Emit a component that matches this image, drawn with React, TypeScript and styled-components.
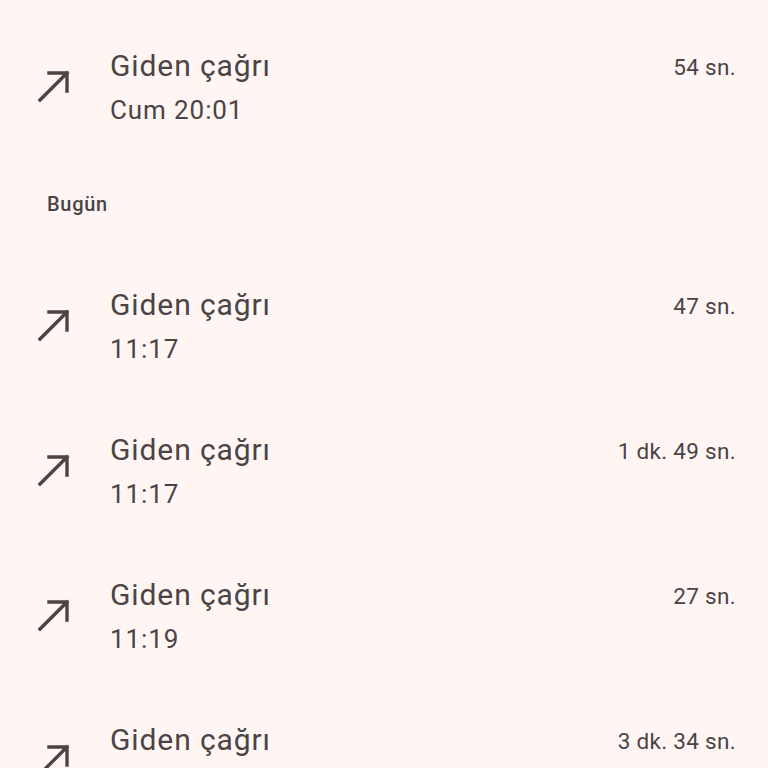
import React from 'react';
import styled, { createGlobalStyle } from 'styled-components';

const GlobalStyle = createGlobalStyle`
  html, body {
    margin: 0;
    padding: 0;
    background: #fff6f4;
  }
  body {
    font-family: Roboto, 'Noto Sans', sans-serif;
    color: #4a4446;
  }
`;

const Page = styled.div`
  width: 768px;
  height: 768px;
  overflow: hidden;
  background: #fff6f4;
  padding-top: 15px;
  box-sizing: border-box;
`;

const Row = styled.div`
  height: 145px;
  display: grid;
  grid-template-columns: 110px 1fr auto;
  align-items: center;
  padding-right: 32px;
  box-sizing: border-box;
`;

const IconCell = styled.div`
  display: flex;
  align-items: center;
  padding-left: 37px;
  margin-top: -4px;
`;

const Texts = styled.div`
  display: flex;
  flex-direction: column;
  gap: 10px;
  margin-top: -2px;
`;

const Title = styled.div`
  font-size: 30px;
  line-height: 37px;
  color: #4a4446;
  letter-spacing: 0.9px;
`;

const Sub = styled.div`
  font-size: 26px;
  line-height: 32px;
  color: #4a4446;
  letter-spacing: 0.9px;
`;

const Duration = styled.div`
  align-self: start;
  margin-top: 37px;
  font-size: 22.5px;
  line-height: 30px;
  color: #4a4446;
  letter-spacing: 0.3px;
`;

const Header = styled.div`
  height: 94px;
  padding: 32px 0 0 47px;
  box-sizing: border-box;
  font-size: 20px;
  font-weight: 500;
  letter-spacing: 0.7px;
  color: #4a4446;
`;

const OutgoingIcon = () => (
  <svg width="34" height="34" viewBox="0 0 34 34" fill="none">
    <path
      d="M3 31 L30 4 M12 4 H30 V22"
      stroke="#4a4446"
      strokeWidth="3.4"
      strokeLinecap="square"
    />
  </svg>
);

interface CallProps {
  time: string;
  duration: string;
}

const Call = ({ time, duration }: CallProps) => (
  <Row>
    <IconCell>
      <OutgoingIcon />
    </IconCell>
    <Texts>
      <Title>Giden çağrı</Title>
      <Sub>{time}</Sub>
    </Texts>
    <Duration>{duration}</Duration>
  </Row>
);

const App = () => (
  <Page>
    <GlobalStyle />
    <Call time="Cum 20:01" duration="54 sn." />
    <Header>Bugün</Header>
    <Call time="11:17" duration="47 sn." />
    <Call time="11:17" duration="1 dk. 49 sn." />
    <Call time="11:19" duration="27 sn." />
    <Call time="11:21" duration="3 dk. 34 sn." />
  </Page>
);

export default App;
